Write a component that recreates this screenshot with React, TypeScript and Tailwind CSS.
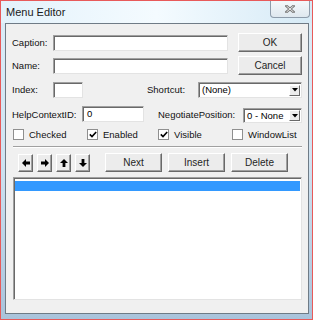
import React from 'react';

const font = { fontFamily: '"Liberation Sans", Arial, sans-serif' };

function Label({ text, w }: { text: string; w: number }) {
  return (
    <div className="shrink-0 text-[9.5px] text-[#111] leading-none" style={{ width: w }}>
      {text}
    </div>
  );
}

function TextBox({ w, h = 16, value }: { w: number; h?: number; value?: string }) {
  return (
    <div
      className="shrink-0 bg-white border border-t-[#a0a0a0] border-l-[#a0a0a0] border-r-[#e3e3e3] border-b-[#e3e3e3] shadow-[inset_1px_1px_0_#696969] flex items-center pl-[4px] text-[9.5px] text-black leading-none"
      style={{ width: w, height: h }}
    >
      {value}
    </div>
  );
}

function Button({ label, w, h = 19 }: { label: string; w: number; h?: number }) {
  return (
    <div
      className="shrink-0 bg-[#ececec] border border-t-white border-l-white border-r-[#696969] border-b-[#696969] shadow-[inset_-1px_-1px_0_#a0a0a0] flex items-center justify-center text-[10px] text-[#1f1f1f] leading-none"
      style={{ width: w, height: h }}
    >
      {label}
    </div>
  );
}

function Combo({ w, h, value }: { w: number; h: number; value: string }) {
  return (
    <div
      className="shrink-0 bg-white border border-t-[#a0a0a0] border-l-[#a0a0a0] border-r-[#e3e3e3] border-b-[#e3e3e3] shadow-[inset_1px_1px_0_#696969] flex items-center justify-between pl-[3px] pr-[1px] text-[9.5px] text-black leading-none"
      style={{ width: w, height: h }}
    >
      <span>{value}</span>
      <div className="w-[11px] h-[11px] bg-[#ececec] border border-t-white border-l-white border-r-[#696969] border-b-[#696969] flex items-center justify-center">
        <svg width="6" height="4" viewBox="0 0 6 4">
          <polygon points="0,0 6,0 3,3.5" fill="#000" />
        </svg>
      </div>
    </div>
  );
}

function Check({ label, checked }: { label: string; checked?: boolean }) {
  return (
    <div className="flex items-center gap-[5px] text-[9.5px] text-[#111] leading-none">
      <div className="w-[11px] h-[11px] bg-white border border-[#8f8f8f] flex items-center justify-center">
        {checked && (
          <svg width="8" height="7" viewBox="0 0 8 7">
            <path d="M0.8 3.4 L3 5.6 L7.2 1" stroke="#000" strokeWidth="1.6" fill="none" />
          </svg>
        )}
      </div>
      <span>{label}</span>
    </div>
  );
}

function ArrowBtn({ rot }: { rot: number }) {
  return (
    <div className="shrink-0 w-[15px] h-[18px] bg-[#ececec] border border-t-white border-l-white border-r-[#696969] border-b-[#696969] shadow-[inset_-1px_-1px_0_#a0a0a0] flex items-center justify-center">
      <svg width="8" height="8" viewBox="0 0 8 8" style={{ transform: `rotate(${rot}deg)` }}>
        <polygon points="0,4 4,0 4,2.6 8,2.6 8,5.4 4,5.4 4,8" fill="#000" />
      </svg>
    </div>
  );
}

export default function App() {
  return (
    <div className="w-[315px] h-[320px] bg-white" style={font}>
      <div className="w-[313px] h-[320px] border border-[#e85a5a] bg-gradient-to-b from-[#dcedf8] via-[#cfe3f1] to-[#a9c3db] flex flex-col">
        {/* Title bar */}
        <div className="h-[22px] shrink-0 flex items-start justify-between bg-gradient-to-r from-[#e4f2fb] via-[#f4fbff] to-[#d6eaf6]">
          <div className="pl-[5px] pt-[6px] text-[11px] text-[#1a1a1a] leading-none">Menu Editor</div>
          <div className="mr-[2px] w-[40px] h-[17px] rounded-b-[4px] border border-t-0 border-[#8e9cab] bg-gradient-to-b from-[#f4f8fb] to-[#dfe8ef] flex items-center justify-center">
            <svg width="10" height="8" viewBox="0 0 10 8">
              <path d="M1.5 1 L8.5 7 M8.5 1 L1.5 7" stroke="#7b7b7b" strokeWidth="2.6" strokeLinecap="square" />
              <path d="M1.5 1 L8.5 7 M8.5 1 L1.5 7" stroke="#f4f4f4" strokeWidth="0.9" />
            </svg>
          </div>
        </div>

        {/* Client area */}
        <div className="ml-[4px] mr-[3px] h-[291px] shrink-0 bg-[#f0f0f0] border border-[#6f7b86] flex flex-col">
          {/* Caption */}
          <div className="mt-[9px] h-[19px] flex items-center">
            <div className="w-[6px] shrink-0" />
            <Label text="Caption:" w={41} />
            <TextBox w={175} />
            <div className="w-[10px] shrink-0" />
            <Button label="OK" w={64} />
          </div>
          {/* Name */}
          <div className="mt-[4px] h-[19px] flex items-center">
            <div className="w-[6px] shrink-0" />
            <Label text="Name:" w={41} />
            <TextBox w={175} />
            <div className="w-[10px] shrink-0" />
            <Button label="Cancel" w={64} />
          </div>
          {/* Index / Shortcut */}
          <div className="mt-[7px] h-[16px] flex items-center">
            <div className="w-[6px] shrink-0" />
            <Label text="Index:" w={41} />
            <TextBox w={30} />
            <div className="w-[64px] shrink-0" />
            <Label text="Shortcut:" w={51} />
            <Combo w={104} h={16} value="(None)" />
          </div>
          {/* HelpContextID / NegotiatePosition */}
          <div className="mt-[8px] h-[17px] flex items-start">
            <div className="w-[6px] shrink-0" />
            <div className="self-center">
              <Label text="HelpContextID:" w={70} />
            </div>
            <TextBox w={62} value="0" />
            <div className="w-[14px] shrink-0" />
            <div className="self-center">
              <Label text="NegotiatePosition:" w={85} />
            </div>
            <div className="mt-[2px]">
              <Combo w={59} h={15} value="0 - None" />
            </div>
          </div>
          {/* Checkboxes */}
          <div className="mt-[5px] h-[13px] flex items-center">
            <div className="w-[7px] shrink-0" />
            <div className="w-[74px] shrink-0"><Check label="Checked" /></div>
            <div className="w-[71px] shrink-0"><Check label="Enabled" checked /></div>
            <div className="w-[74px] shrink-0"><Check label="Visible" checked /></div>
            <Check label="WindowList" />
          </div>
          {/* Separator */}
          <div className="mt-[5px] ml-[7px] w-[289px] h-[2px] border-t border-t-[#a0a0a0] border-b border-b-white" />
          {/* Buttons */}
          <div className="mt-[5px] h-[19px] flex items-center">
            <div className="w-[12px] shrink-0" />
            <div className="flex gap-[4px]">
              <ArrowBtn rot={0} />
              <ArrowBtn rot={180} />
              <ArrowBtn rot={90} />
              <ArrowBtn rot={270} />
            </div>
            <div className="w-[15px] shrink-0" />
            <div className="flex gap-[6px]">
              <Button label="Next" w={57} />
              <Button label="Insert" w={57} />
              <Button label="Delete" w={57} />
            </div>
          </div>
          {/* List */}
          <div className="mt-[5px] ml-[7px] w-[289px] h-[123px] bg-white border border-t-[#a0a0a0] border-l-[#a0a0a0] border-r-[#e3e3e3] border-b-[#e3e3e3] shadow-[inset_1px_1px_0_#696969] pt-[3px] pl-[1px] pr-[1px]">
            <div className="h-[10px] bg-[#3399ff]" />
          </div>
        </div>
      </div>
    </div>
  );
}
